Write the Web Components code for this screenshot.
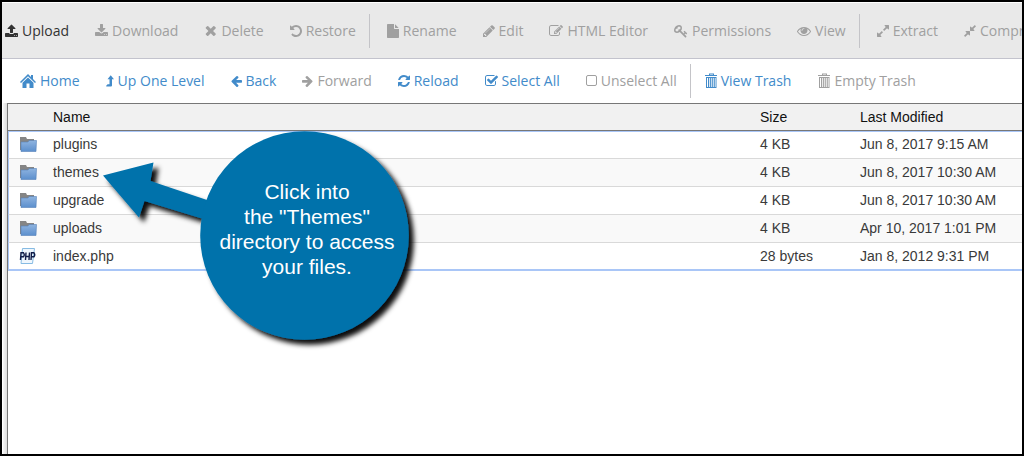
<!DOCTYPE html>
<html lang="en">
<head>
<meta charset="utf-8">
<title>File Manager</title>
<style>
html, body { margin: 0; height: 100%; }
body { background: #fff; font-family: "Open Sans", sans-serif; font-size: 14px; }
</style>
</head>
<body>
<file-manager>
  <tool-bar slot="actions" class="actions" label="File actions">
    <tool-button icon="upload" active>Upload</tool-button>
    <tool-button icon="download" disabled>Download</tool-button>
    <tool-button icon="remove" disabled>Delete</tool-button>
    <tool-button icon="undo" disabled>Restore</tool-button>
    <tool-separator wide></tool-separator>
    <tool-button icon="file" disabled>Rename</tool-button>
    <tool-button icon="pencil" disabled>Edit</tool-button>
    <tool-button icon="edit" disabled>HTML Editor</tool-button>
    <tool-button icon="key" disabled>Permissions</tool-button>
    <tool-button icon="eye" disabled>View</tool-button>
    <tool-separator wide></tool-separator>
    <tool-button icon="expand" disabled>Extract</tool-button>
    <tool-button icon="compress" disabled>Compress</tool-button>
  </tool-bar>
  <tool-bar slot="navigation" class="navigation" label="Navigation">
    <tool-button icon="home">Home</tool-button>
    <tool-button icon="levelup">Up One Level</tool-button>
    <tool-button icon="left">Back</tool-button>
    <tool-button icon="right" disabled>Forward</tool-button>
    <tool-button icon="refresh">Reload</tool-button>
    <tool-button icon="check">Select All</tool-button>
    <tool-button icon="square" disabled>Unselect All</tool-button>
    <tool-separator></tool-separator>
    <tool-button icon="trash">View Trash</tool-button>
    <tool-button icon="trash" disabled>Empty Trash</tool-button>
  </tool-bar>
  <file-table></file-table>
  <help-callout slot="callout">Click into<br>the "Themes"<br>directory to access<br>your files.</help-callout>
</file-manager>

<script>
// Each icon: [drawn width in px, viewBox, markup]
const ICONS = {
  upload: [13, "64 0 1664 1792", `<path d="M1344 1472q0-26-19-45t-45-19-45 19-19 45 19 45 45 19 45-19 19-45zm256 0q0-26-19-45t-45-19-45 19-19 45 19 45 45 19 45-19 19-45zm128-224v320q0 40-28 68t-68 28h-1472q-40 0-68-28t-28-68v-320q0-40 28-68t68-28h427q21 56 70.5 92t110.5 36h256q61 0 110.5-36t70.5-92h427q40 0 68 28t28 68zm-325-648q-17 40-59 40h-256v448q0 26-19 45t-45 19h-256q-26 0-45-19t-19-45v-448h-256q-42 0-59-40-17-39 14-69l448-448q18-19 45-19t45 19l448 448q31 30 14 69z"/>`],
  download: [13, "64 0 1664 1792", `<path d="M1344 1344q0-26-19-45t-45-19-45 19-19 45 19 45 45 19 45-19 19-45zm256 0q0-26-19-45t-45-19-45 19-19 45 19 45 45 19 45-19 19-45zm128-224v320q0 40-28 68t-68 28h-1472q-40 0-68-28t-28-68v-320q0-40 28-68t68-28h465l135 136q58 56 136 56t136-56l136-136h464q40 0 68 28t28 68zm-325-569q17 41-14 70l-448 448q-18 19-45 19t-45-19l-448-448q-31-29-14-70 17-39 59-39h256v-448q0-26 19-45t45-19h256q26 0 45 19t19 45v448h256q42 0 59 39z"/>`],
  remove: [13, "100 164 1532 1592", `<path d="M1490 1322q0 40-28 68l-136 136q-28 28-68 28t-68-28l-294-294-294 294q-28 28-68 28t-68-28l-136-136q-28-28-28-68t28-68l294-294-294-294q-28-28-28-68t28-68l136-136q28-28 68-28t68 28l294 294 294-294q28-28 68-28t68 28l136 136q28 28 28 68t-28 68l-294 294 294 294q28 28 28 68z"/>`],
  undo: [12, "128 0 1536 1792", `<path d="M1664 896q0 156-61 298t-164 245-245 164-298 61q-172 0-327-72.5t-264-204.5q-7-10-6.5-22.5t8.5-20.5l137-138q10-9 25-9 16 2 23 12 73 95 179 147t225 52q104 0 198.5-40.5t163.5-109.5 109.5-163.5 40.5-198.5-40.5-198.5-109.5-163.5-163.5-109.5-198.5-40.5q-98 0-188 35.5t-160 101.5l137 138q31 30 14 69-17 40-59 40h-448q-26 0-45-19t-19-45v-448q0-42 40-59 39-17 69 14l130 129q107-101 244.5-156.5t284.5-55.5q156 0 298 61t245 164 164 245 61 298z"/>`],
  file: [12, "128 0 1536 1792", `<path d="M1152 512v-472q22 14 36 28l408 408q14 14 28 36h-472zm-128 32q0 40 28 68t68 28h544v1056q0 40-28 68t-68 28h-1344q-40 0-68-28t-28-68v-1600q0-40 28-68t68-28h800v544z"/>`],
  pencil: [12, "128 0 1536 1792", `<path d="M491 1536l91-91-235-235-91 91v107h128v128h107zm523-928q0-22-22-22-10 0-17 7l-542 542q-7 7-7 17 0 22 22 22 10 0 17-7l542-542q7-7 7-17zm-54-192l416 416-832 832h-416v-416zm683 96q0 53-37 90l-166 166-416-416 166-165q36-38 90-38 53 0 91 38l235 234q37 39 37 91z"/>`],
  edit: [14, "0 0 1792 1792", `<path d="M888 1184l116-116-152-152-116 116v56h96v96h56zm440-720q-16-16-33 1l-350 350q-17 17-1 33t33-1l350-350q17-17 1-33zm80 594v190q0 119-84.5 203.5t-203.5 84.5h-832q-119 0-203.5-84.5t-84.5-203.5v-832q0-119 84.5-203.5t203.5-84.5h832q63 0 117 25 15 7 18 23 3 17-9 29l-49 49q-14 14-32 8-23-6-45-6h-832q-66 0-113 47t-47 113v832q0 66 47 113t113 47h832q66 0 113-47t47-113v-126q0-13 9-22l64-64q15-15 35-7t20 29zm-96-738l288 288-672 672h-288v-288zm444 132l-92 92-288-288 92-92q28-28 68-28t68 28l152 152q28 28 28 68t-28 68z"/>`],
  key: [14, "0 0 1792 1792", `<path d="M832 512q0-80-56-136t-136-56-136 56-56 136q0 42 19 83-41-19-83-19-80 0-136 56t-56 136 56 136 136 56 136-56 56-136q0-42-19-83 41 19 83 19 80 0 136-56t56-136zm851 704q0 17-49 66t-66 49q-9 0-28.5-16t-36.5-33-38.5-40-24.5-26l-96 96 220 220q28 28 28 68 0 42-39 81t-81 39q-40 0-68-28l-671-671q-176 131-365 131-163 0-265.5-102.5t-102.5-265.5q0-160 95-313t248-248 313-95q163 0 265.5 102.5t102.5 265.5q0 189-131 365l355 355 96-96q-3-3-26-24.5t-40-38.5-33-36.5-16-28.5q0-17 49-66t66-49q13 0 23 10 6 6 46 44.5t82 79.5 86.5 86 73 78 28.5 41z"/>`],
  eye: [14, "0 0 1792 1792", `<path d="M1664 960q-152-236-381-353 61 104 61 225 0 185-131.5 316.5t-316.5 131.5-316.5-131.5-131.5-316.5q0-121 61-225-229 117-381 353 133 205 333.5 326.5t434.5 121.5 434.5-121.5 333.5-326.5zm-720-384q0-20-14-34t-34-14q-125 0-214.5 89.5t-89.5 214.5q0 20 14 34t34 14 34-14 14-34q0-86 61-147t147-61q20 0 34-14t14-34zm848 384q0 34-20 69-140 230-376.5 368.5t-499.5 138.5-499.5-139-376.5-368q-20-35-20-69t20-69q140-229 376.5-368t499.5-139 499.5 139 376.5 368q20 35 20 69z"/>`],
  expand: [12, "128 0 1536 1792", `<path d="M883 1056q0 13-10 23l-332 332 144 144q19 19 19 45t-19 45-45 19h-448q-26 0-45-19t-19-45v-448q0-26 19-45t45-19 45 19l144 144 332-332q10-10 23-10t23 10l114 114q10 10 10 23zm781-864v448q0 26-19 45t-45 19-45-19l-144-144-332 332q-10 10-23 10t-23-10l-114-114q-10-10-10-23t10-23l332-332-144-144q-19-19-19-45t19-45 45-19h448q26 0 45 19t19 45z"/>`],
  compress: [12, "128 0 1536 1792", `<path d="M896 960v448q0 26-19 45t-45 19-45-19l-144-144-332 332q-10 10-23 10t-23-10l-114-114q-10-10-10-23t10-23l332-332-144-144q-19-19-19-45t19-45 45-19h448q26 0 45 19t19 45zm755-672q0 13-10 23l-332 332 144 144q19 19 19 45t-19 45-45 19h-448q-26 0-45-19t-19-45v-448q0-26 19-45t45-19 45 19l144 144 332-332q10-10 23-10t23 10l114 114q10 10 10 23z"/>`],
  home: [16, "0 0 16 14", `<path d="M8 0 11 3V1h2v4l3 3-1 1-7-6.700L1 9 0 8z"/><path d="M8 3.500 13.500 8.700V14H9.500V9.500h-3V14H2.500V8.700z"/>`],
  levelup: [8, "0 0 8 14", `<path d="M4.700 1.200 8 5.200H6V11.500Q6 12.500 5 12.500H.5L0 12 1.600 10.300H3.500V5.200H1.500z"/>`],
  left: [11, "128 0 1536 1792", `<path d="M1664 896v128q0 53-32.500 90.500t-84.500 37.500h-704l293 294q38 36 38 90t-38 90l-75 76q-37 37-90 37-52 0-91-37l-651-652q-37-37-37-90 0-52 37-91l651-650q38-38 91-38 52 0 90 38l75 74q38 38 38 91t-38 91l-293 293h704q52 0 84.500 37.500t32.500 90.500z"/>`],
  right: [11, "128 0 1536 1792", `<path transform="translate(1792 0) scale(-1 1)" d="M1664 896v128q0 53-32.500 90.500t-84.500 37.500h-704l293 294q38 36 38 90t-38 90l-75 76q-37 37-90 37-52 0-91-37l-651-652q-37-37-37-90 0-52 37-91l651-650q38-38 91-38 52 0 90 38l75 74q38 38 38 91t-38 91l-293 293h704q52 0 84.500 37.500t32.500 90.500z"/>`],
  refresh: [12, "128 0 1536 1792", `<path d="M1639 1056q0 5-1 7-64 268-268 434.5t-478 166.5q-146 0-282.5-55t-243.5-157l-129 129q-19 19-45 19t-45-19-19-45v-448q0-26 19-45t45-19h448q26 0 45 19t19 45-19 45l-137 137q71 66 161 102t187 36q134 0 250-65t186-179q11-17 53-117 8-23 30-23h192q13 0 22.5 9.5t9.5 22.5zm25-800v448q0 26-19 45t-45 19h-448q-26 0-45-19t-19-45 19-45l138-138q-148-137-349-137-134 0-250 65t-186 179q-11 17-53 117-8 23-30 23h-199q-13 0-22.5-9.5t-9.5-22.5v-7q65-268 270-434.5t480-166.5q146 0 284 55.5t245 156.5l130-129q19-19 45-19t45 19 19 45z"/>`],
  check: [13, "64 0 1664 1792", `<path d="M1472 930v318q0 119-84.5 203.5t-203.5 84.5h-832q-119 0-203.500-84.500t-84.500-203.500v-832q0-119 84.500-203.500t203.500-84.500h832q63 0 117 25 15 7 18 23 3 17-9 29l-49 49q-10 10-23 10-3 0-9-2-23-6-45-6h-832q-66 0-113 47t-47 113v832q0 66 47 113t113 47h832q66 0 113-47t47-113v-254q0-13 9-22l64-64q10-10 23-10 6 0 12 3 20 8 20 29zm231-489l-814 814q-24 24-57 24t-57-24l-430-430q-24-24-24-57t24-57l110-110q24-24 57-24t57 24l263 263 647-647q24-24 57-24t57 24l110 110q24 24 24 57t-24 57z"/>`],
  square: [11, "0 0 11 14", `<rect x=".5" y="1.500" width="10" height="10" rx="1.500" fill="none" stroke="currentColor"/>`],
  trash: [13, "0 0 13 16", `<path d="M1 2h4V0.500h5V2h3v1H1zM6 1.500V2h3V1.500zM2 4h10.500v11H2zM3 5v9h1V5zM5.200 5v9h.9V5zM7.300 5v9h.9V5zM9 5v9h.7V5zM10.800 5v9h.8V5z" fill-rule="evenodd"/>`]
};

class FileManager extends HTMLElement {
  constructor() {
    super();
    this.attachShadow({ mode: "open" }).innerHTML = `
      <style>
        :host { display: flex; flex-direction: column; position: relative; box-sizing: border-box;
          min-height: 100vh; border: 2px solid #000; overflow: hidden; }
        .top { background: #e9e9e9; border-bottom: 1px solid #c3c3cd; padding: 11px 0 10px; border-top: 1px solid #fff; }
        .nav { background: #fff; padding: 5px 0; }
        main { flex: 1; display: flex; flex-direction: column; margin-left: 1px; padding-left: 4px;
          background: linear-gradient(90deg, #f6f6f6, #dcdcdc 4px); }
        ::slotted(.actions) { --start: 3px; }
        ::slotted(.navigation) { --start: 18px; }
      </style>
      <header>
        <div class="top"><slot name="actions"></slot></div>
        <div class="nav"><slot name="navigation"></slot></div>
      </header>
      <main><slot></slot></main>
      <slot name="callout"></slot>`;
  }
}
customElements.define("file-manager", FileManager);

class ToolBar extends HTMLElement {
  constructor() {
    super();
    this.attachShadow({ mode: "open" }).innerHTML = `
      <style>
        :host { display: block; overflow: hidden; }
        div { display: flex; align-items: center; height: 34px; padding-left: var(--start); }
        ::slotted(tool-button) { margin-right: 13px; }
        ::slotted(tool-button:not(:first-child)) { margin-left: 13px; }
      </style>
      <div role="toolbar"><slot></slot></div>`;
    this.shadowRoot.querySelector("div").setAttribute("aria-label", this.getAttribute("label") || "");
  }
}
customElements.define("tool-bar", ToolBar);

class ToolSeparator extends HTMLElement {
  constructor() {
    super();
    this.attachShadow({ mode: "open" }).innerHTML = `
      <style>
        :host { display: block; flex: none; width: 1px; height: 34px; background: #c4c4c8; }
        :host([wide]) { margin-right: 4px; }
      </style>`;
  }
}
customElements.define("tool-separator", ToolSeparator);

class ToolButton extends HTMLElement {
  constructor() {
    super();
    const [width, box, markup] = ICONS[this.getAttribute("icon")];
    const height = this.getAttribute("icon") === "trash" ? 16 : 14;
    this.attachShadow({ mode: "open" }).innerHTML = `
      <style>
        :host { display: block; flex: none; color: #428bca; }
        :host([active]) { color: #333; }
        :host([disabled]) { color: #a0a0a0; }
        button { display: flex; align-items: center; gap: 4px; height: 34px; padding: 0; border: 0;
          background: none; color: inherit; font: inherit; line-height: 20px; white-space: nowrap; }
        svg { display: block; flex: none; fill: currentColor; }
      </style>
      <button type="button"><svg width="${width}" height="${height}" viewBox="${box}" aria-hidden="true">${markup}</svg><span><slot></slot></span></button>`;
    this.shadowRoot.querySelector("button").disabled = this.hasAttribute("disabled");
  }
}
customElements.define("tool-button", ToolButton);

class FileIcon extends HTMLElement {
  constructor() {
    super();
    const folder = `<svg width="18" height="16" viewBox="0 0 18 16" aria-hidden="true">
      <defs><linearGradient id="g" x2="0" y2="1"><stop stop-color="#8fb4e0"/><stop offset="1" stop-color="#5c8fcd"/></linearGradient></defs>
      <path d="M1 1h6l1 2h7v11H1z" fill="#858585"/><path d="M2 6h7l1-1.500h7.500l-.5 11H2z" fill="url(#g)" stroke="#5681b8" stroke-width=".6"/></svg>`;
    const php = `<svg width="18" height="16" viewBox="0 0 18 16" aria-hidden="true">
      <path d="M3.500 .5h12l-2 15H2z" fill="#eef6fd" stroke="#86bbe3"/>
      <path d="M1.500 12 2 4.800h2.500q1.500 2 0 4H2M7 4.500 6.500 12M10.500 4.500 10 12M7 8.500h3.500M12 12l.5-7.200H15q1.500 2 0 4h-2.500" fill="none" stroke="#101c48" stroke-width="1.400"/></svg>`;
    this.attachShadow({ mode: "open" }).innerHTML = `
      <style>:host { display: block; } svg { display: block; }</style>${this.getAttribute("kind") === "php" ? php : folder}`;
  }
}
customElements.define("file-icon", FileIcon);

const FILES = [
  ["folder", "plugins", "4 KB", "Jun 8, 2017 9:15 AM"],
  ["folder", "themes", "4 KB", "Jun 8, 2017 10:30 AM"],
  ["folder", "upgrade", "4 KB", "Jun 8, 2017 10:30 AM"],
  ["folder", "uploads", "4 KB", "Apr 10, 2017 1:01 PM"],
  ["php", "index.php", "28 bytes", "Jan 8, 2012 9:31 PM"]
];

class FileTable extends HTMLElement {
  constructor() {
    super();
    this.attachShadow({ mode: "open" }).innerHTML = `
      <style>
        :host { display: block; flex: 1; background: #fff; border-left: 1px solid #777; border-top: 1px solid #777;
          font: 14px/20px "Liberation Sans", Arial, sans-serif; color: #3a3a3a; }
        table { width: 100%; table-layout: fixed; border-collapse: separate; border-spacing: 0; }
        .icon { width: 45px; }
        .size { width: 100px; }
        .date { width: 162px; }
        th, td { box-sizing: border-box; padding: 0; text-align: left; font-weight: 400; white-space: nowrap; }
        th { height: 27px; background: #f1f1f1; border-bottom: 1px solid #777; color: #111; }
        td { height: 28px; padding-bottom: 1px; border-bottom: 1px solid #d9d9d9; }
        td:first-child { border-left: 1px solid #a9c6f7; padding-left: 10px; }
        tr:nth-child(even) td { background: #f9f9f9; }
        tbody tr:first-child td { border-top: 1px solid #a9c6f7; padding-bottom: 2px; }
        tbody tr:last-child td { border-bottom: 2px solid #a9c6f7; padding-bottom: 0; }
      </style>
      <table>
        <colgroup><col class="icon"><col><col class="size"><col class="date"></colgroup>
        <thead><tr><th scope="col" aria-label="Type"></th><th scope="col">Name</th><th scope="col">Size</th><th scope="col">Last Modified</th></tr></thead>
        <tbody>${FILES.map(([kind, name, size, date]) =>
          `<tr><td><file-icon kind="${kind}"></file-icon></td><td>${name}</td><td>${size}</td><td>${date}</td></tr>`).join("")}</tbody>
      </table>`;
  }
}
customElements.define("file-table", FileTable);

// Annotation laid over the table, with an arrow to the "themes" row.
class HelpCallout extends HTMLElement {
  constructor() {
    super();
    this.attachShadow({ mode: "open" }).innerHTML = `
      <style>
        :host { display: block; position: absolute; left: 98px; top: 128px; width: 320px; height: 224px; pointer-events: none; }
        svg { position: absolute; inset: 0; }
        p { position: relative; margin: 0; padding: 49px 10px 0 104px; text-align: center; color: #fff;
          font: 21px/25px "Liberation Sans", Arial, sans-serif; }
      </style>
      <svg width="320" height="224" viewBox="100 130 320 224" aria-hidden="true">
        <defs><filter id="s" x="-10%" y="-10%" width="120%" height="120%"><feDropShadow dx="5" dy="5" stdDeviation="2.500" flood-color="#000" flood-opacity=".95"/></filter></defs>
        <g fill="#0072ab" filter="url(#s)">
          <path d="M103 175.500 153.500 162.500 150.500 181 210 201V221L144.500 201 139 217.500z"/>
          <circle cx="304.500" cy="235.500" r="104.300"/>
        </g>
      </svg>
      <p><slot></slot></p>`;
  }
}
customElements.define("help-callout", HelpCallout);
</script>
</body>
</html>
